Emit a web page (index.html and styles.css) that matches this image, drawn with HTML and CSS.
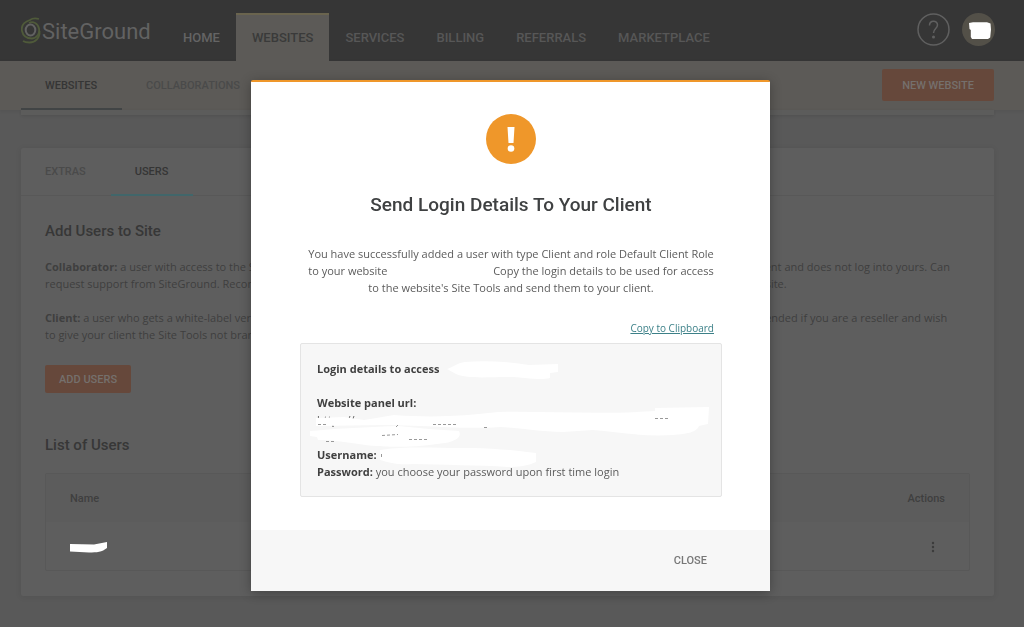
FILE: index.html
```
<!DOCTYPE html>
<html lang="en">
<head>
    <meta charset="UTF-8">
    <meta name="viewport" content="width=device-width, initial-scale=1.0">
    <title>SiteGround - Websites</title>
    <link rel="stylesheet" href="styles.css">
</head>
<body>
    <header class="header">
        <a href="#" class="logo">
            <svg class="logo-mark" viewBox="0 0 20 28" aria-hidden="true">
                <path d="M18 2C14 1 11 1.500 9 3 3 5 0 9 1 14c1 5 5 7.500 10 7.500 5-.5 8-5 7-10C17 6 12 4 8 6" fill="none" stroke="#4f5a3a" stroke-width="1.800"/>
                <path d="M18.500 14c.5 7-4 11.500-10 11.500-3 0-5-.5-6.500-1.500" fill="none" stroke="#4f5a3a" stroke-width="1.800"/>
                <ellipse cx="9.500" cy="13" rx="4.800" ry="5.500" fill="none" stroke="#626262" stroke-width="2"/>
            </svg>
            <span>SiteGround</span>
        </a>
        <nav class="nav">
            <a href="#" class="light">Home</a>
            <a href="#" class="active">Websites</a>
            <a href="#">Services</a>
            <a href="#">Billing</a>
            <a href="#">Referrals</a>
            <a href="#">Marketplace</a>
        </nav>
        <div class="account">
            <button class="help" aria-label="Help">
                <svg viewBox="0 0 33 33" fill="none" stroke="#606060">
                    <circle cx="16.500" cy="16.500" r="15.500" stroke-width="1.500"/>
                    <path d="M12.500 12.500c0-5.500 8-5.500 8-.5 0 3.500-4 3.500-4 8" stroke-width="1.500"/>
                    <circle cx="16.500" cy="24" r="1.500" fill="#606060" stroke="none"/>
                </svg>
            </button>
            <button class="avatar" aria-label="Account">
                <svg viewBox="0 0 33 33">
                    <path d="M7 10l4-.8h14l3.500 1.200.5 6-.8 8L26 26H10l-1.200-2v-7L7.500 16z" fill="#fff"/>
                </svg>
            </button>
        </div>
    </header>

    <div class="subnav">
        <nav class="tabs">
            <a href="#" class="active">Websites</a>
            <a href="#">Collaborations</a>
        </nav>
        <button class="btn btn-large">New Website</button>
    </div>

    <main class="page">
        <div class="card-end"></div>
        <section class="card">
            <nav class="tabs card-tabs">
                <a href="#">Extras</a>
                <a href="#" class="active">Users</a>
            </nav>
            <div class="card-body">
                <h2>Add Users to Site</h2>
                <p><b>Collaborator:</b> a user with access to the Site Tools of this site, who already has their very own SiteGround account and works from it as the client and does not log into yours. Can<br>
                request support from SiteGround. Recommended if you are working with freelancers or with some other people who help you often on your site.</p>
                <p><b>Client:</b> a user who gets a white-label version of the Site Tools and who can not request any support directly from SiteGround. Highly recommended if you are a reseller and wish<br>
                to give your client the Site Tools not branded as SiteGround.</p>
                <button class="btn">Add Users</button>
                <h2 class="list-title">List of Users</h2>
                <table class="users">
                    <thead>
                        <tr><th>Name</th><th class="actions">Actions</th></tr>
                    </thead>
                    <tbody>
                        <tr>
                            <td>
                                <svg class="name-mask" viewBox="0 0 38 12"><path d="M0 2l24 .5L37 0v6c-5 4-10 4.500-18 4.500L0 9.500z" fill="#fff"/></svg>
                            </td>
                            <td class="actions"><button class="more" aria-label="More actions">
                                <svg viewBox="0 0 4 12" fill="#3c3c3c"><circle cx="2" cy="2" r="1.200"/><circle cx="2" cy="6" r="1.200"/><circle cx="2" cy="10" r="1.200"/></svg>
                            </button></td>
                        </tr>
                    </tbody>
                </table>
            </div>
        </section>
    </main>

    <div class="modal-layer">
        <div class="modal" role="dialog" aria-labelledby="modal-title">
            <div class="modal-body">
                <svg class="warning" viewBox="0 0 50 50">
                    <circle cx="25" cy="25" r="25" fill="#ef972a"/>
                    <path d="M21.500 13h7l-1 16h-5z" fill="#fff"/>
                    <circle cx="25" cy="34.500" r="3.300" fill="#fff"/>
                </svg>
                <h1 id="modal-title">Send Login Details To Your Client</h1>
                <p class="message">You have successfully added a user with type Client and role Default Client Role to your website <span class="blank"></span> Copy the login details to be used for access to the website's Site Tools and send them to your client.</p>
                <a href="#" class="copy">Copy to Clipboard</a>
                <div class="details">
                    <p><b>Login details to access</b></p>
                    <p class="url"><b>Website panel url:</b><br>https://</p>
                    <p><b>Username:</b><br><b>Password:</b> you choose your password upon first time login</p>
                    <!-- masked account data -->
                    <svg class="masks" viewBox="0 0 430 180" aria-hidden="true">
                        <g fill="#fff">
                            <path d="M147 39c6-2 10-6 18-7 22-2 45 0 64 3l29-1v8l-8 1v5c-10 3-25-1-42-1-20 0-40 2-52-3z"/>
                            <path d="M16 88l28-1 20 3 30-5c40 3 70 1 104-3 50-1 100 3 157-1v-3l54-1-1 17-9 2c-2 6-12 8-26 9-30 2-55-3-80-5l-30 2c-20 0-40-4-63-5-30 2-50 0-80-1l-30-1-74 1z"/>
                            <path d="M10 101c22-2 55-4 88-5 22 2 40 4 61 5 3 6-3 10-14 12-23 3-40 5-65 3-20 0-35-6-62-6l-1-3-7-1z"/>
                            <path d="M80 120c25-4 53-2 81-2 30 0 52 2 75 5v9c-8 4-18 5-28 5-30-2-65-2-95-3-14 1-20 0-33-4z"/>
                        </g>
                        <g fill="none" stroke="#999" stroke-dasharray="3 2">
                            <path d="M18 94.500h8M133 94.500h24M184 97.500h5M32 96.500h2M355 88.500h14M26 111.500h10M82 105.500l16-1M109 109.500h20M96 97l2-2M81.500 124v4"/>
                        </g>
                    </svg>
                </div>
            </div>
            <div class="modal-footer">
                <button class="close">Close</button>
            </div>
        </div>
    </div>
</body>
</html>
```

FILE: styles.css
```
* {
    box-sizing: border-box;
}
body {
    margin: 0;
    min-height: 100vh;
    background-color: #595959;
    color: #3f3f3f;
    font-family: 'Open Sans', sans-serif;
    font-size: 11px;
    line-height: 17px;
    overflow: hidden;
}
a {
    color: inherit;
    text-decoration: none;
}
button {
    border: 0;
    padding: 0;
    background: none;
    font-family: Roboto, sans-serif;
    font-weight: 500;
    text-transform: uppercase;
    cursor: pointer;
}
svg {
    display: block;
}
h1, h2, p {
    margin: 0;
}

/* header */
.header {
    display: flex;
    align-items: flex-end;
    height: 61px;
    padding: 0 29px 0 21px;
    background-color: #363636;
}
.logo {
    display: flex;
    align-items: center;
    gap: 1px;
    width: 146px;
    height: 60px;
    color: #626262;
    font-family: Roboto, sans-serif;
    font-size: 22px;
}
.logo-mark {
    width: 20px;
    height: 28px;
}
.nav {
    display: flex;
    flex: 1;
}
.nav a {
    height: 48px;
    padding: 0 16px;
    border-top: 2px solid transparent;
    color: #575757;
    font-family: Roboto, sans-serif;
    font-size: 13px;
    font-weight: 500;
    line-height: 45px;
    text-transform: uppercase;
}
.nav .light {
    color: #646464;
}
.nav .active {
    border-top-color: #6a644e;
    background-color: #5c5a57;
    color: #3a3a3a;
}
.account {
    display: flex;
    gap: 12px;
    padding-bottom: 15px;
}
.account button {
    width: 33px;
    height: 33px;
}
.account .avatar {
    border-radius: 50%;
    background-color: #535048;
}

/* tabs */
.subnav {
    display: flex;
    justify-content: space-between;
    height: 49px;
    padding: 0 30px 0 21px;
    background-color: #5c5a57;
    box-shadow: 0 1px 4px rgba(0,0,0,0.08);
}
.tabs {
    display: flex;
}
.tabs a {
    height: 49px;
    padding: 0 25px 0 24px;
    border-bottom: 2px solid transparent;
    color: #4a4a4a;
    font-family: Roboto, sans-serif;
    font-size: 11px;
    font-weight: 500;
    line-height: 49px;
    text-transform: uppercase;
}
.tabs .active {
    border-bottom-color: #414445;
    color: #353535;
}
.btn {
    height: 28px;
    padding: 0 14px;
    border-radius: 2px;
    background-color: #66483b;
    color: #75706d;
    font-size: 11px;
}
.btn-large {
    height: 32px;
    margin-top: 8px;
    padding: 0 20px;
}

/* page */
.page {
    padding: 0 30px 0 21px;
}
.card-end {
    height: 5px;
    margin-bottom: 33px;
    background-color: #5c5c5b;
    box-shadow: 0 1px 3px rgba(0,0,0,0.1);
}
.card {
    border-radius: 2px;
    background-color: #5e5e5e;
    box-shadow: 0 1px 6px rgba(0,0,0,0.08);
}
.card-tabs {
    height: 48px;
    border-bottom: 1px solid #585858;
}
.card-tabs a {
    height: 48px;
    line-height: 48px;
}
.card-tabs .active {
    border-bottom-color: #41666a;
}
.card-body {
    padding: 25px 24px;
}
h2 {
    margin-bottom: 16px;
    color: #373737;
    font-family: Roboto, sans-serif;
    font-size: 15px;
    font-weight: 500;
    line-height: 21px;
}
.card-body p {
    margin-bottom: 17px;
    white-space: nowrap;
}
.card-body .btn {
    margin-top: 5px;
}
.card-body .list-title {
    margin: 42px 0 17px;
}
.users {
    width: 100%;
    border: 1px solid #585858;
    border-collapse: separate;
    border-spacing: 0;
    border-radius: 2px;
}
.users th, .users td {
    height: 48px;
    padding: 0 24px;
    text-align: left;
}
.users th {
    background-color: #5c5c5c;
    font-family: Roboto, sans-serif;
    font-size: 11px;
    font-weight: 500;
}
.users td {
    padding-top: 4px;
}
.users .actions {
    text-align: right;
}
.name-mask {
    width: 38px;
    height: 12px;
}
.more {
    padding: 0 10px;
}
.more svg {
    width: 4px;
    height: 12px;
}

/* modal */
.modal-layer {
    position: fixed;
    inset: 0;
    display: flex;
    justify-content: center;
    align-items: flex-start;
    padding: 80px 3px 0 0;
}
.modal {
    width: 519px;
    border-top: 2px solid #ef972a;
    border-radius: 2px;
    background-color: #fff;
    box-shadow: 0 2px 12px rgba(0,0,0,0.3);
    color: #5b5b5b;
}
.modal-body {
    display: flex;
    flex-direction: column;
    align-items: center;
    padding: 32px 48px 33px 49px;
}
.warning {
    width: 50px;
    height: 50px;
}
h1 {
    margin: 27px 0 26px;
    color: #3f4142;
    font-family: Roboto, sans-serif;
    font-size: 19px;
    font-weight: 500;
    line-height: 28px;
}
.message {
    padding: 0 6px;
    text-align: center;
}
.blank {
    display: inline-block;
    width: 100px;
}
.copy {
    align-self: flex-end;
    margin: 24px 8px 6px 0;
    color: #3c8088;
    font-size: 10px;
    text-decoration: underline;
}
.details {
    position: relative;
    width: 100%;
    padding: 16px;
    border: 1px solid #e4e4e4;
    border-radius: 2px;
    background-color: #f7f7f7;
}
.details p {
    margin-bottom: 17px;
}
.details .url {
    margin-bottom: 18px;
}
.details p:last-of-type {
    margin-bottom: 0;
}
.details b {
    color: #404040;
}
.masks {
    position: absolute;
    top: -14px;
    left: -1px;
    width: 430px;
    height: 180px;
}
.modal-footer {
    display: flex;
    justify-content: flex-end;
    padding: 14px 47px;
    background-color: #f7f7f7;
}
.close {
    height: 33px;
    padding: 0 16px;
    color: #777;
    font-size: 11px;
}
```
